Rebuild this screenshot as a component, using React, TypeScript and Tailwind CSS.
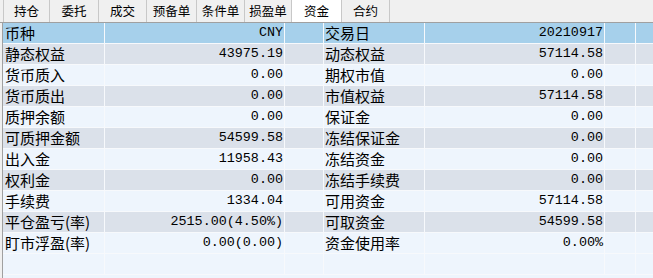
const tabs = [
  ["持仓", 47],
  ["委托", 49],
  ["成交", 48],
  ["预备单", 50],
  ["条件单", 48],
  ["损盈单", 47],
  ["资金", 50],
  ["合约", 48],
] as const;

const rows: [string, string, string, string][] = [
  ["静态权益", "43975.19", "动态权益", "57114.58"],
  ["货币质入", "0.00", "期权市值", "0.00"],
  ["货币质出", "0.00", "市值权益", "57114.58"],
  ["质押余额", "0.00", "保证金", "0.00"],
  ["可质押金额", "54599.58", "冻结保证金", "0.00"],
  ["出入金", "11958.43", "冻结资金", "0.00"],
  ["权利金", "0.00", "冻结手续费", "0.00"],
  ["手续费", "1334.04", "可用资金", "57114.58"],
  ["平仓盈亏(率)", "2515.00(4.50%)", "可取资金", "54599.58"],
  ["盯市浮盈(率)", "0.00(0.00)", "资金使用率", "0.00%"],
];

const cjk = "font-['Noto_Sans_CJK_SC',sans-serif]";
const mono = "font-['Liberation_Mono','Noto_Sans_CJK_SC',monospace]";

function Row({ cells, bg }: { cells: [string, string, string, string]; bg: string }) {
  const [a, b, c, d] = cells;
  return (
    <div className={`flex h-[21px] border-b border-[#f7f9fc] ${bg} text-black`}>
      <div className={`w-[102px] shrink-0 border-r border-[#f7f9fc] pl-[2px] text-[15px] leading-[20px] ${cjk}`}>{a}</div>
      <div className={`w-[180px] shrink-0 border-r border-[#f7f9fc] pr-[1px] text-right text-[13.4px] leading-[20px] ${mono}`}>{b}</div>
      <div className="w-[39px] shrink-0 border-r border-[#f7f9fc]" />
      <div className={`w-[101px] shrink-0 border-r border-[#f7f9fc] pl-[1px] text-[15px] leading-[20px] ${cjk}`}>{c}</div>
      <div className={`w-[180px] shrink-0 border-r border-[#f7f9fc] pr-[1px] text-right text-[13.4px] leading-[20px] ${mono}`}>{d}</div>
      <div className="w-[31px] shrink-0 border-r border-[#f7f9fc]" />
      <div className="flex-1" />
    </div>
  );
}

export default function App() {
  return (
    <div className="h-[278px] w-[653px] overflow-hidden bg-[#f0f0f0]">
      {/* tab strip */}
      <div className="flex h-[23px] border-b border-[#a0a0a0] pl-[3px]">
        {tabs.map(([name, w], i) => (
          <div
            key={name}
            style={{ width: w }}
            className={`flex h-[22px] shrink-0 items-center justify-center border-r border-[#c8c8c8] text-[12.5px] ${cjk} ${
              name === "资金" ? "bg-white" : ""
            } ${i === 0 ? "border-l" : ""}`}
          >
            {name}
          </div>
        ))}
      </div>
      {/* grid */}
      <div className="ml-[2px] border-l border-[#a0a0a0] bg-[#eef5fd]">
        <Row cells={["币种", "CNY", "交易日", "20210917"]} bg="bg-[#a6d0eb]" />
        {rows.map((r, i) => (
          <Row key={i} cells={r} bg={i % 2 === 0 ? "bg-[#dbe1ea]" : "bg-[#eef5fd]"} />
        ))}
        <Row cells={["", "", "", ""]} bg="bg-[#eef5fd]" />
        <div className="h-[10px]" />
      </div>
    </div>
  );
}
